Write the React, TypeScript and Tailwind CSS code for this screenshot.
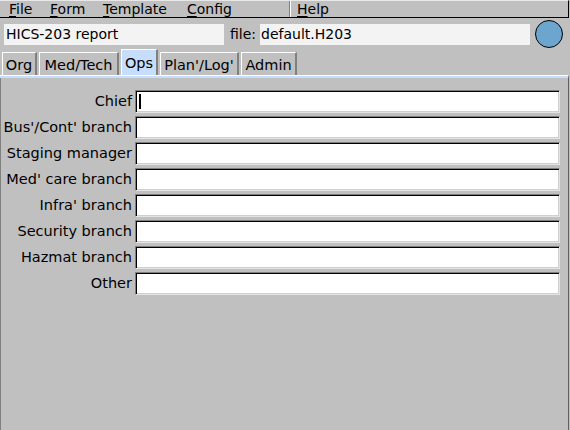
import React from 'react';

// ─── 데이터 ──────────────────────────────────────────────────────────────────

const MENUS = [
  { key: 'F', rest: 'ile', pl: 'pl-[9px]', w: 'w-[50px]' },
  { key: 'F', rest: 'orm', pl: 'pl-0', w: 'w-[53px]' },
  { key: 'T', rest: 'emplate', pl: 'pl-0', w: 'w-[84px]' },
  { key: 'C', rest: 'onfig', pl: 'pl-0', w: 'w-[102px]' },
];

const TABS = [
  { t: 'Org', w: 'w-[35px]' },
  { t: 'Med/Tech', w: 'w-[80px]' },
  { t: 'Ops', w: 'w-[37px]' },
  { t: "Plan'/Log'", w: 'w-[79px]' },
  { t: 'Admin', w: 'w-[56px]' },
];

const FIELDS = [
  'Chief',
  "Bus'/Cont' branch",
  'Staging manager',
  "Med' care branch",
  "Infra' branch",
  'Security branch',
  'Hazmat branch',
  'Other',
];

// ─── 메인 ────────────────────────────────────────────────────────────────────

export default function App() {
  return (
    <div className="w-[570px] h-[430px] bg-[#c0c0c0] text-black text-[14px] leading-none font-['DejaVu_Sans',sans-serif] flex flex-col overflow-hidden">
      {/* 메뉴바 */}
      <div className="h-[18px] w-[569px] flex items-center border-t border-t-[#e8e8e8] border-b border-b-black border-r border-r-black">
        {MENUS.map((m, i) => (
          <span key={i} className={`${m.pl} ${m.w} shrink-0`}>
            <span className="underline underline-offset-2">{m.key}</span>
            {m.rest}
          </span>
        ))}
        <div className="h-full w-[2px] border-l border-l-[#808080] border-r border-r-white" />
        <span className="pl-[6px]">
          <span className="underline underline-offset-2">H</span>elp
        </span>
      </div>

      {/* 제목 / 파일 */}
      <div className="h-[32px] flex items-center pl-[4px]">
        <div className="w-[220px] h-[21px] bg-[#f3f3f3] flex items-center pl-[2px]">HICS-203 report</div>
        <span className="ml-[6px] w-[30px]">file:</span>
        <div className="w-[270px] h-[21px] bg-[#f3f3f3] flex items-center pl-[1px]">default.H203</div>
        <div className="ml-[5px] w-[28px] h-[28px] rounded-full bg-[#6ca6cf] border border-black" />
      </div>

      {/* 탭 */}
      <div className="h-[25px] flex items-end pl-[2px] gap-[2px] text-[14.5px]">
        {TABS.map(({ t, w }) => {
          const sel = t === 'Ops';
          return (
            <div
              key={t}
              className={`${w} flex items-center justify-center border-t border-l border-t-white border-l-white border-r-2 border-r-[#808080] ${
                sel ? 'h-[26px] bg-[#c6ddfb] pt-[1px]' : 'h-[23px] bg-[#c0c0c0] pt-[2px]'
              }`}
            >
              {t}
            </div>
          );
        })}
      </div>
      <div className="w-[569px] h-[3px] bg-[#c6ddfb] border-t border-t-white border-r border-r-[#808080]" />

      {/* 본문 */}
      <div className="flex-1 w-[569px] border-l border-l-[#808080] border-r border-r-[#606060] pt-[12px] text-[14.5px]">
        <div className="grid grid-cols-[131px_425px] gap-x-[3px] gap-y-[3px]">
          {FIELDS.map((f, i) => (
            <React.Fragment key={f}>
              <div className="h-[23px] flex items-center justify-end">{f}</div>
              <div className="h-[23px] bg-white border border-t-[#7f7f7f] border-l-[#7f7f7f] border-b-[#e4e4e4] border-r-[#e4e4e4] shadow-[inset_1px_1px_0_#000,inset_-1px_-1px_0_#cfcfcf] flex items-center pl-[3px]">
                {i === 0 && <span className="w-[2px] h-[15px] bg-black" />}
              </div>
            </React.Fragment>
          ))}
        </div>
      </div>
    </div>
  );
}
